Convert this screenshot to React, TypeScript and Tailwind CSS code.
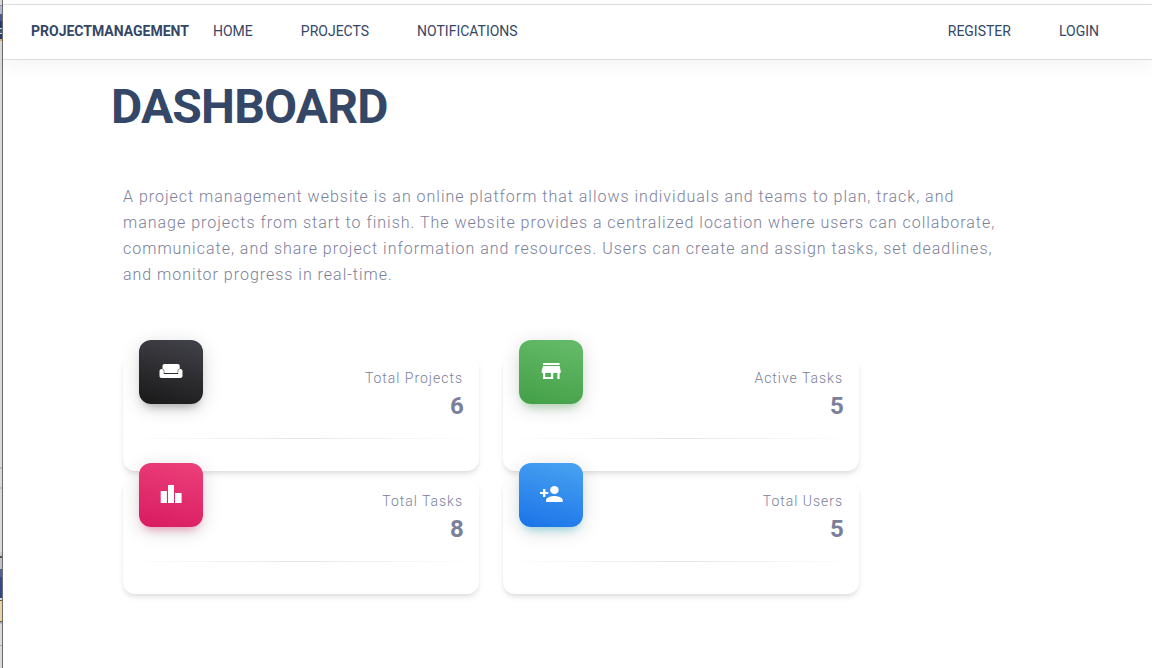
import type { ReactNode } from "react";

type Stat = { label: string; value: number; icon: ReactNode; tile: string };

const stats: Stat[] = [
  {
    label: "Total Projects",
    value: 6,
    icon: (
      <>
        <path d="M5.5 5h13.2c1.2 0 2 .8 2 2v3c-1.4 0-2 .8-2 2v2H5.3v-2c0-1.200-.6-2-1.800-2V7c0-1.200.8-2 2-2z" />
        <path d="M2.700 10c1.300 0 2.100.8 2.100 2v3h14.400v-3c0-1.200.8-2 2.100-2 1.300 0 2.200.9 2.200 2v5c0 1.200-.9 2-2 2h-19c-1.200 0-2-.8-2-2v-5c0-1.100.9-2 2.200-2z" />
      </>
    ),
    tile: "bg-[linear-gradient(195deg,#42424a,#191919)] shadow-[0_4px_20px_0_rgba(0,0,0,.14),0_7px_10px_-5px_rgba(64,64,64,.4)]",
  },
  {
    label: "Active Tasks",
    value: 5,
    icon: (
      <path
        fillRule="evenodd"
        d="M4 4h16.600v2H4V4zm0 3h16.600l1.100 5v2h-1.100v6h-2.200v-6h-4.200v6H4v-6H2.700v-2L4 7zm2.200 7v4h5.900v-4H6.200z"
      />
    ),
    tile: "bg-[linear-gradient(195deg,#66bb6a,#43a047)] shadow-[0_4px_20px_0_rgba(0,0,0,.14),0_7px_10px_-5px_rgba(76,175,80,.4)]",
  },
  {
    label: "Total Tasks",
    value: 8,
    icon: <path d="M1.700 9h6.200v12H1.700V9zM9 3h6v18H9V3zM16 11h6.600v10H16V11z" />,
    tile: "bg-[linear-gradient(195deg,#ec407a,#d81b60)] shadow-[0_4px_20px_0_rgba(0,0,0,.14),0_7px_10px_-5px_rgba(233,30,99,.4)]",
  },
  {
    label: "Total Users",
    value: 5,
    icon: (
      <>
        <ellipse cx="15.400" cy="8" rx="4.300" ry="4" />
        <path d="M15.400 14c-2.700 0-8.300 1.340-8.300 4v2h16.600v-2c0-2.660-5.600-4-8.300-4z" />
        <path d="M4 7h2.400v3h2.900v2H6.400v3H4v-3H1v-2h3V7z" />
      </>
    ),
    tile: "bg-[linear-gradient(195deg,#49a3f1,#1a73e8)] shadow-[0_4px_20px_0_rgba(0,0,0,.14),0_7px_10px_-5px_rgba(0,188,212,.4)]",
  },
];

function StatCard({ label, value, icon, tile }: Stat) {
  return (
    <div className="h-[115px] rounded-xl bg-white shadow-[0_4px_6px_-1px_rgba(0,0,0,.1),0_2px_4px_-1px_rgba(0,0,0,.06)]">
      <div className="flex h-[82px] items-start justify-between px-4">
        <div className={`-mt-4 flex size-16 justify-center rounded-xl pt-[19px] text-white ${tile}`}>
          <svg viewBox="0 0 24 24" className="size-6 fill-current">
            {icon}
          </svg>
        </div>
        <div className="pt-[11px] text-right">
          <p className="text-sm leading-[22px] font-light tracking-[0.98px]">{label}</p>
          <p className="pt-px text-2xl leading-[33px] font-bold tracking-[-0.8px]">{value}</p>
        </div>
      </div>
      <div className="h-px bg-[linear-gradient(90deg,transparent,rgba(0,0,0,.4),transparent)] opacity-25" />
    </div>
  );
}

function WindowEdge() {
  return (
    <div className="flex w-[3px] shrink-0 flex-col border-r border-[#6b6b6b] bg-[#dadada]">
      <div className="mt-[5px] h-[9px] border-t border-[#8c8fa0] bg-[#b3b9d6]" />
      <div className="h-[7px] bg-[#4d5a93]" />
      <div className="h-[7px] bg-[#2b3a73]" />
      <div className="h-[6px] border-y border-[#d5dae6] bg-[#3c5c78]" />
      <div className="h-[5px] bg-[#2b3a73]" />
      <div className="h-[2px] bg-[#e0b050]" />
      <div className="mt-[426px] h-[2px] bg-[#bcbcc4]" />
      <div className="mt-[18px] h-[2px] bg-[#bcbcc4]" />
      <div className="mt-[63px] h-[4px] bg-[#c8c8d0]" />
      <div className="h-[13px] border-t-2 border-[#555555] bg-[#c0c0c8]" />
      <div className="h-[8px] bg-[#53609a]" />
      <div className="h-[21px] bg-[#34488a]" />
      <div className="mt-[2px] h-[22px] border-y border-[#7a5a18] bg-[#ead3a6]" />
      <div className="h-[2px] bg-[#a9b4d0]" />
      <div className="mt-[21px] h-px bg-[#aaaaaa]" />
    </div>
  );
}

export default function App() {
  return (
    <div className="flex h-[668px] w-[1152px] overflow-hidden bg-white font-[Roboto,sans-serif] text-[#7b809a]">
      <WindowEdge />
      <div className="flex min-w-0 flex-1 flex-col pt-1">
        <nav className="flex h-14 items-center border-y border-[#dcdcdc] bg-white pr-[53px] pb-[3px] pl-7 text-sm text-[#344767] shadow-[0_8px_16px_rgba(0,0,0,.04)]">
          <a className="w-[182px] font-bold">PROJECTMANAGEMENT</a>
          <div className="flex gap-12">
            <a>HOME</a>
            <a>PROJECTS</a>
            <a>NOTIFICATIONS</a>
          </div>
          <div className="ml-auto flex gap-12">
            <a>REGISTER</a>
            <a>LOGIN</a>
          </div>
        </nav>
        <main className="px-[108px] pt-[17px]">
          <h1 className="text-5xl leading-[60px] font-bold tracking-[-0.8px] text-[#344767]">DASHBOARD</h1>
          <div className="pl-3">
            <p className="w-[900px] pt-[47px] text-base leading-[26px] font-light tracking-[0.99px]">
              A project management website is an online platform that allows individuals and teams to plan, track, and
              <br />
              manage projects from start to finish. The website provides a centralized location where users can collaborate,
              <br />
              communicate, and share project information and resources. Users can create and assign tasks, set deadlines,
              <br />
              and monitor progress in real-time.
            </p>
            <div className="grid w-[736px] grid-cols-2 gap-x-6 gap-y-2 pt-[68px]">
              {stats.map((s) => (
                <StatCard key={s.label} {...s} />
              ))}
            </div>
          </div>
        </main>
      </div>
    </div>
  );
}
